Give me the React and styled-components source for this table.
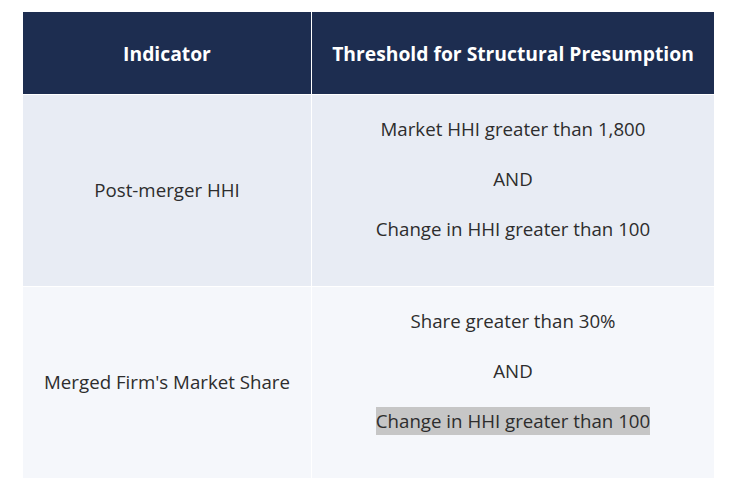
import React from 'react';
import styled, { createGlobalStyle } from 'styled-components';

const GlobalStyle = createGlobalStyle`
  body {
    margin: 0;
    background: #ffffff;
    font-family: 'Open Sans', 'Liberation Sans', sans-serif;
  }
`;

const Page = styled.div`
  padding: 12px 0 0 23px;
`;

const Table = styled.table`
  width: 691px;
  border-collapse: collapse;
  table-layout: fixed;
`;

const HeadCell = styled.th`
  width: ${(p) => p.$width || 'auto'};
  height: 82px;
  padding: 0 12px;
  background: #1d2d50;
  color: #ffffff;
  font-size: 19.3px;
  font-weight: 700;
  text-align: center;
  vertical-align: middle;
  border-left: ${(p) => (p.$first ? 'none' : '1px solid #ffffff')};
`;

const Row = styled.tr`
  background: ${(p) => (p.$alt ? '#f5f7fb' : '#e8ecf4')};
  border-top: 1px solid #ffffff;
`;

const Cell = styled.td`
  padding: 20px 12px 21px;
  color: #2d2d2d;
  font-size: 18.7px;
  line-height: 28px;
  text-align: center;
  vertical-align: middle;
  border-left: ${(p) => (p.$first ? 'none' : '1px solid #ffffff')};
`;

const Line = styled.p`
  margin: 0 0 22px;
`;

const Marked = styled.span`
  display: inline-block;
  line-height: 28px;
  background: #c6c6c6;
`;

const rows = [
  {
    indicator: 'Post-merger HHI',
    lines: ['Market HHI greater than 1,800', 'AND', 'Change in HHI greater than 100'],
  },
  {
    indicator: "Merged Firm's Market Share",
    lines: ['Share greater than 30%', 'AND', 'Change in HHI greater than 100'],
    markLast: true,
  },
];

export default function App() {
  return (
    <>
      <GlobalStyle />
      <Page>
        <Table>
          <thead>
            <tr>
              <HeadCell $first $width="264px">Indicator</HeadCell>
              <HeadCell>Threshold for Structural Presumption</HeadCell>
            </tr>
          </thead>
          <tbody>
            {rows.map((row, i) => (
              <Row key={row.indicator} $alt={i % 2 === 1}>
                <Cell $first>{row.indicator}</Cell>
                <Cell>
                  {row.lines.map((text, j) => (
                    <Line key={j}>
                      {row.markLast && j === row.lines.length - 1 ? <Marked>{text}</Marked> : text}
                    </Line>
                  ))}
                </Cell>
              </Row>
            ))}
          </tbody>
        </Table>
      </Page>
    </>
  );
}
